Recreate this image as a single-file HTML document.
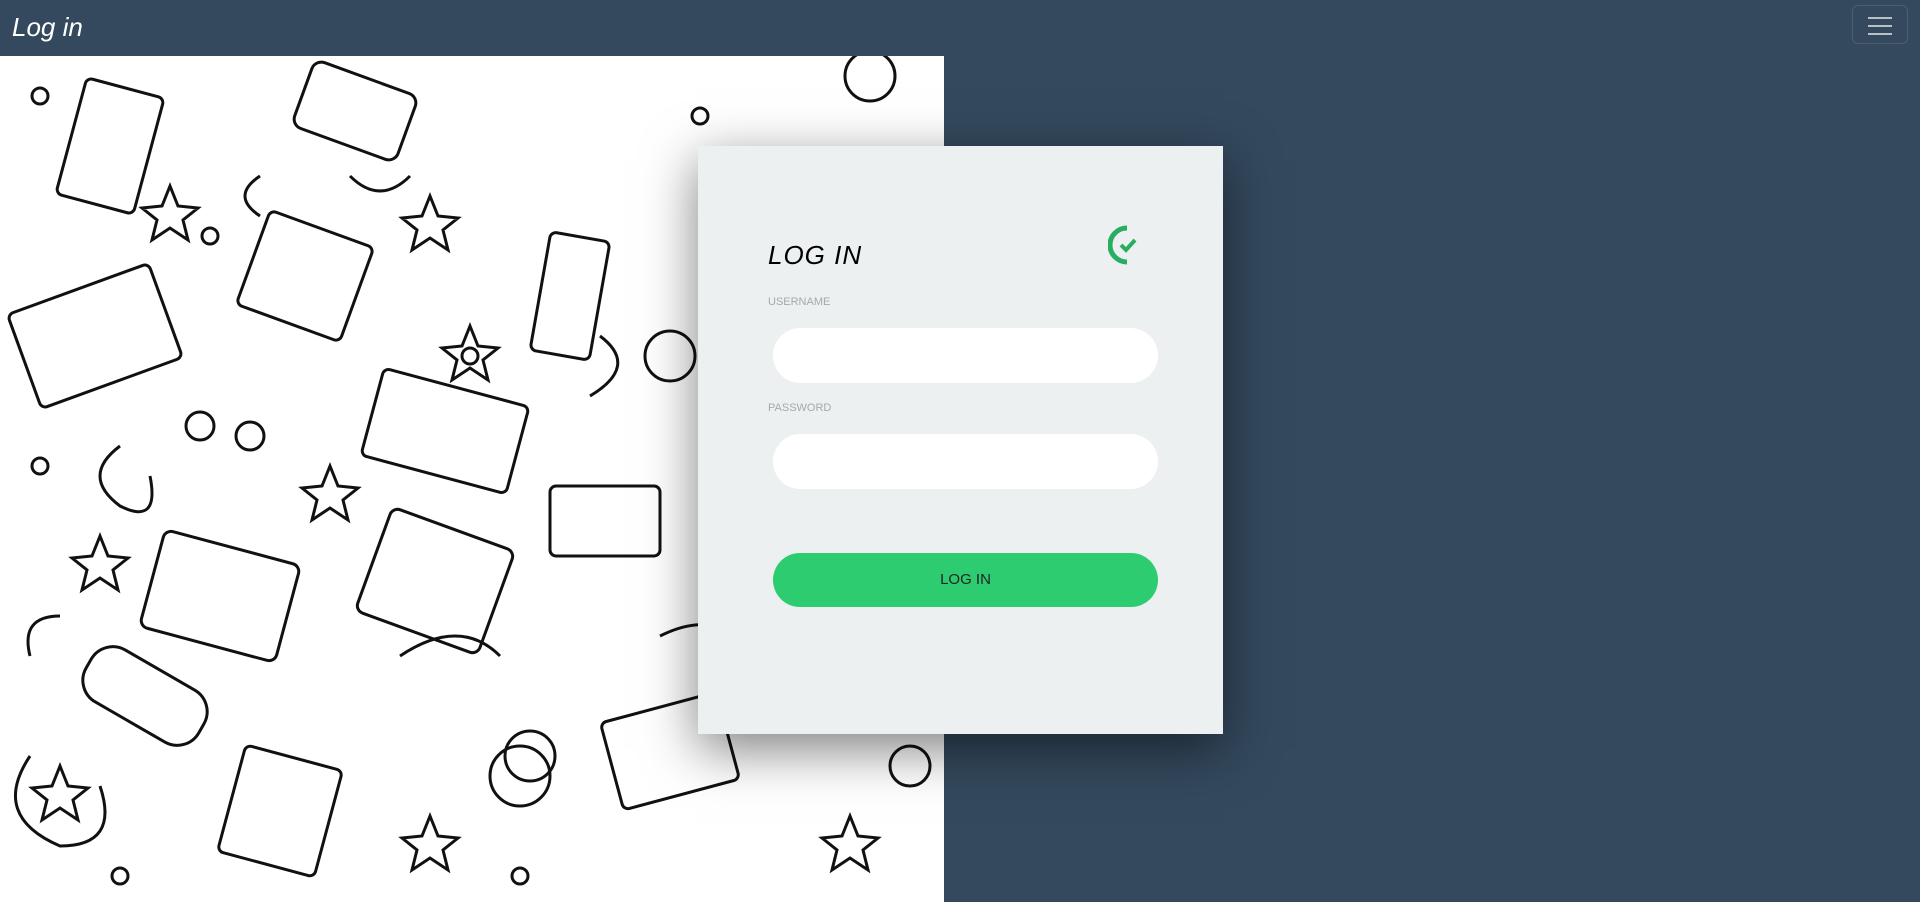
<!DOCTYPE html>
<html style="width:1920px;height:902px;overflow:hidden"><head><meta charset="utf-8"><style>
*{margin:0;padding:0;box-sizing:border-box}
body{width:1920px;height:902px;background:#34495e;position:relative;overflow:hidden;font-family:"Liberation Sans",sans-serif}
.nav{position:absolute;left:0;top:0;width:1920px;height:56px;background:#34495e}
.brand{position:absolute;left:12px;top:12px;color:#fff;font-size:26px;font-style:italic;font-family:"Liberation Sans",sans-serif}
.tog{position:absolute;left:1852px;top:5px;width:56px;height:39px;border:1px solid rgba(255,255,255,.12);border-radius:6px}
.tog i{position:absolute;left:15px;width:24px;height:2px;background:#b8c0c8}
.img{position:absolute;left:0;top:56px;width:944px;height:846px;background:#fff;overflow:hidden}
.card{position:absolute;left:698px;top:146px;width:525px;height:588px;background:#ecf0f1;box-shadow:0 15px 50px rgba(0,0,0,.5)}
.title{position:absolute;left:70px;top:94px;font-size:26px;font-style:italic;color:#000;letter-spacing:1px}
.lbl{position:absolute;left:70px;font-size:11px;color:#a8a8a8}
.inp{position:absolute;left:75px;width:385px;height:55px;background:#fff;border-radius:28px}
.btn{position:absolute;left:75px;top:407px;width:385px;height:54px;background:#2ecc71;border-radius:27px;text-align:center;line-height:54px;font-size:15px;color:#222}
</style></head><body>
<div class="nav"><div class="brand">Log in</div><div class="tog"><i style="top:11px"></i><i style="top:19px"></i><i style="top:27px"></i></div></div>
<div class="img"><svg width="944" height="846" fill="none" stroke="#111" stroke-width="3">
<rect x="70" y="30" width="80" height="120" rx="6" transform="rotate(15 110 90)"/>
<rect x="300" y="20" width="110" height="70" rx="10" transform="rotate(20 355 55)"/>
<rect x="20" y="230" width="150" height="100" rx="6" transform="rotate(-20 95 280)"/>
<rect x="250" y="170" width="110" height="100" rx="6" transform="rotate(20 305 220)"/>
<rect x="540" y="180" width="60" height="120" rx="6" transform="rotate(10 570 240)"/>
<rect x="370" y="330" width="150" height="90" rx="6" transform="rotate(15 445 375)"/>
<rect x="150" y="490" width="140" height="100" rx="8" transform="rotate(15 220 540)"/>
<rect x="370" y="470" width="130" height="110" rx="8" transform="rotate(20 435 525)"/>
<rect x="550" y="430" width="110" height="70" rx="6"/>
<rect x="230" y="700" width="100" height="110" rx="6" transform="rotate(15 280 755)"/>
<rect x="80" y="610" width="130" height="60" rx="25" transform="rotate(30 145 640)"/>
<rect x="610" y="650" width="120" height="90" rx="6" transform="rotate(-15 670 695)"/>
<path d="M120 390 q-40 30 0 60 q40 20 30 -30 M60 560 q-40 0 -30 40 M400 600 q60-40 100 0 M350 120 q30 30 60 0 M260 120 q-30 20 0 40 M600 280 q40 30 -10 60 M30 700 q-40 60 30 90 q60 0 40-60 M660 580 q60-30 90 20"/>
<circle cx="520" cy="720" r="30"/><circle cx="200" cy="370" r="14"/><circle cx="250" cy="380" r="14"/>
<circle cx="40" cy="40" r="8"/><circle cx="210" cy="180" r="8"/><circle cx="470" cy="300" r="8"/><circle cx="520" cy="820" r="8"/><circle cx="120" cy="820" r="8"/><circle cx="700" cy="60" r="8"/><circle cx="40" cy="410" r="8"/>
<path d="M170 130 l8 20 20 2 -15 12 5 20 -18-12 -18 12 5-20 -15-12 20-2z M430 140 l8 20 20 2 -15 12 5 20 -18-12 -18 12 5-20 -15-12 20-2z M330 410 l8 20 20 2 -15 12 5 20 -18-12 -18 12 5-20 -15-12 20-2z M100 480 l8 20 20 2 -15 12 5 20 -18-12 -18 12 5-20 -15-12 20-2z M60 710 l8 20 20 2 -15 12 5 20 -18-12 -18 12 5-20 -15-12 20-2z M430 760 l8 20 20 2 -15 12 5 20 -18-12 -18 12 5-20 -15-12 20-2z M850 760 l8 20 20 2 -15 12 5 20 -18-12 -18 12 5-20 -15-12 20-2z M470 270 l8 20 20 2 -15 12 5 20 -18-12 -18 12 5-20 -15-12 20-2z"/>
<circle cx="670" cy="300" r="25"/><circle cx="530" cy="700" r="25"/><circle cx="870" cy="20" r="25"/><circle cx="910" cy="710" r="20"/>
</svg></div>
<div class="card">
<div class="title">LOG IN</div>
<svg style="position:absolute;left:410px;top:78px" width="34" height="42" viewBox="0 0 34 42"><path d="M19 4 A16 16 0 0 0 19 38" fill="none" stroke="#27ae60" stroke-width="5"/><path d="M13 21 l5 5 9-10" fill="none" stroke="#27ae60" stroke-width="4"/></svg>
<div class="lbl" style="top:150px">USERNAME</div>
<div class="inp" style="top:182px"></div>
<div class="lbl" style="top:256px">PASSWORD</div>
<div class="inp" style="top:288px"></div>
<div class="btn">LOG IN</div>
</div>
</body></html>
